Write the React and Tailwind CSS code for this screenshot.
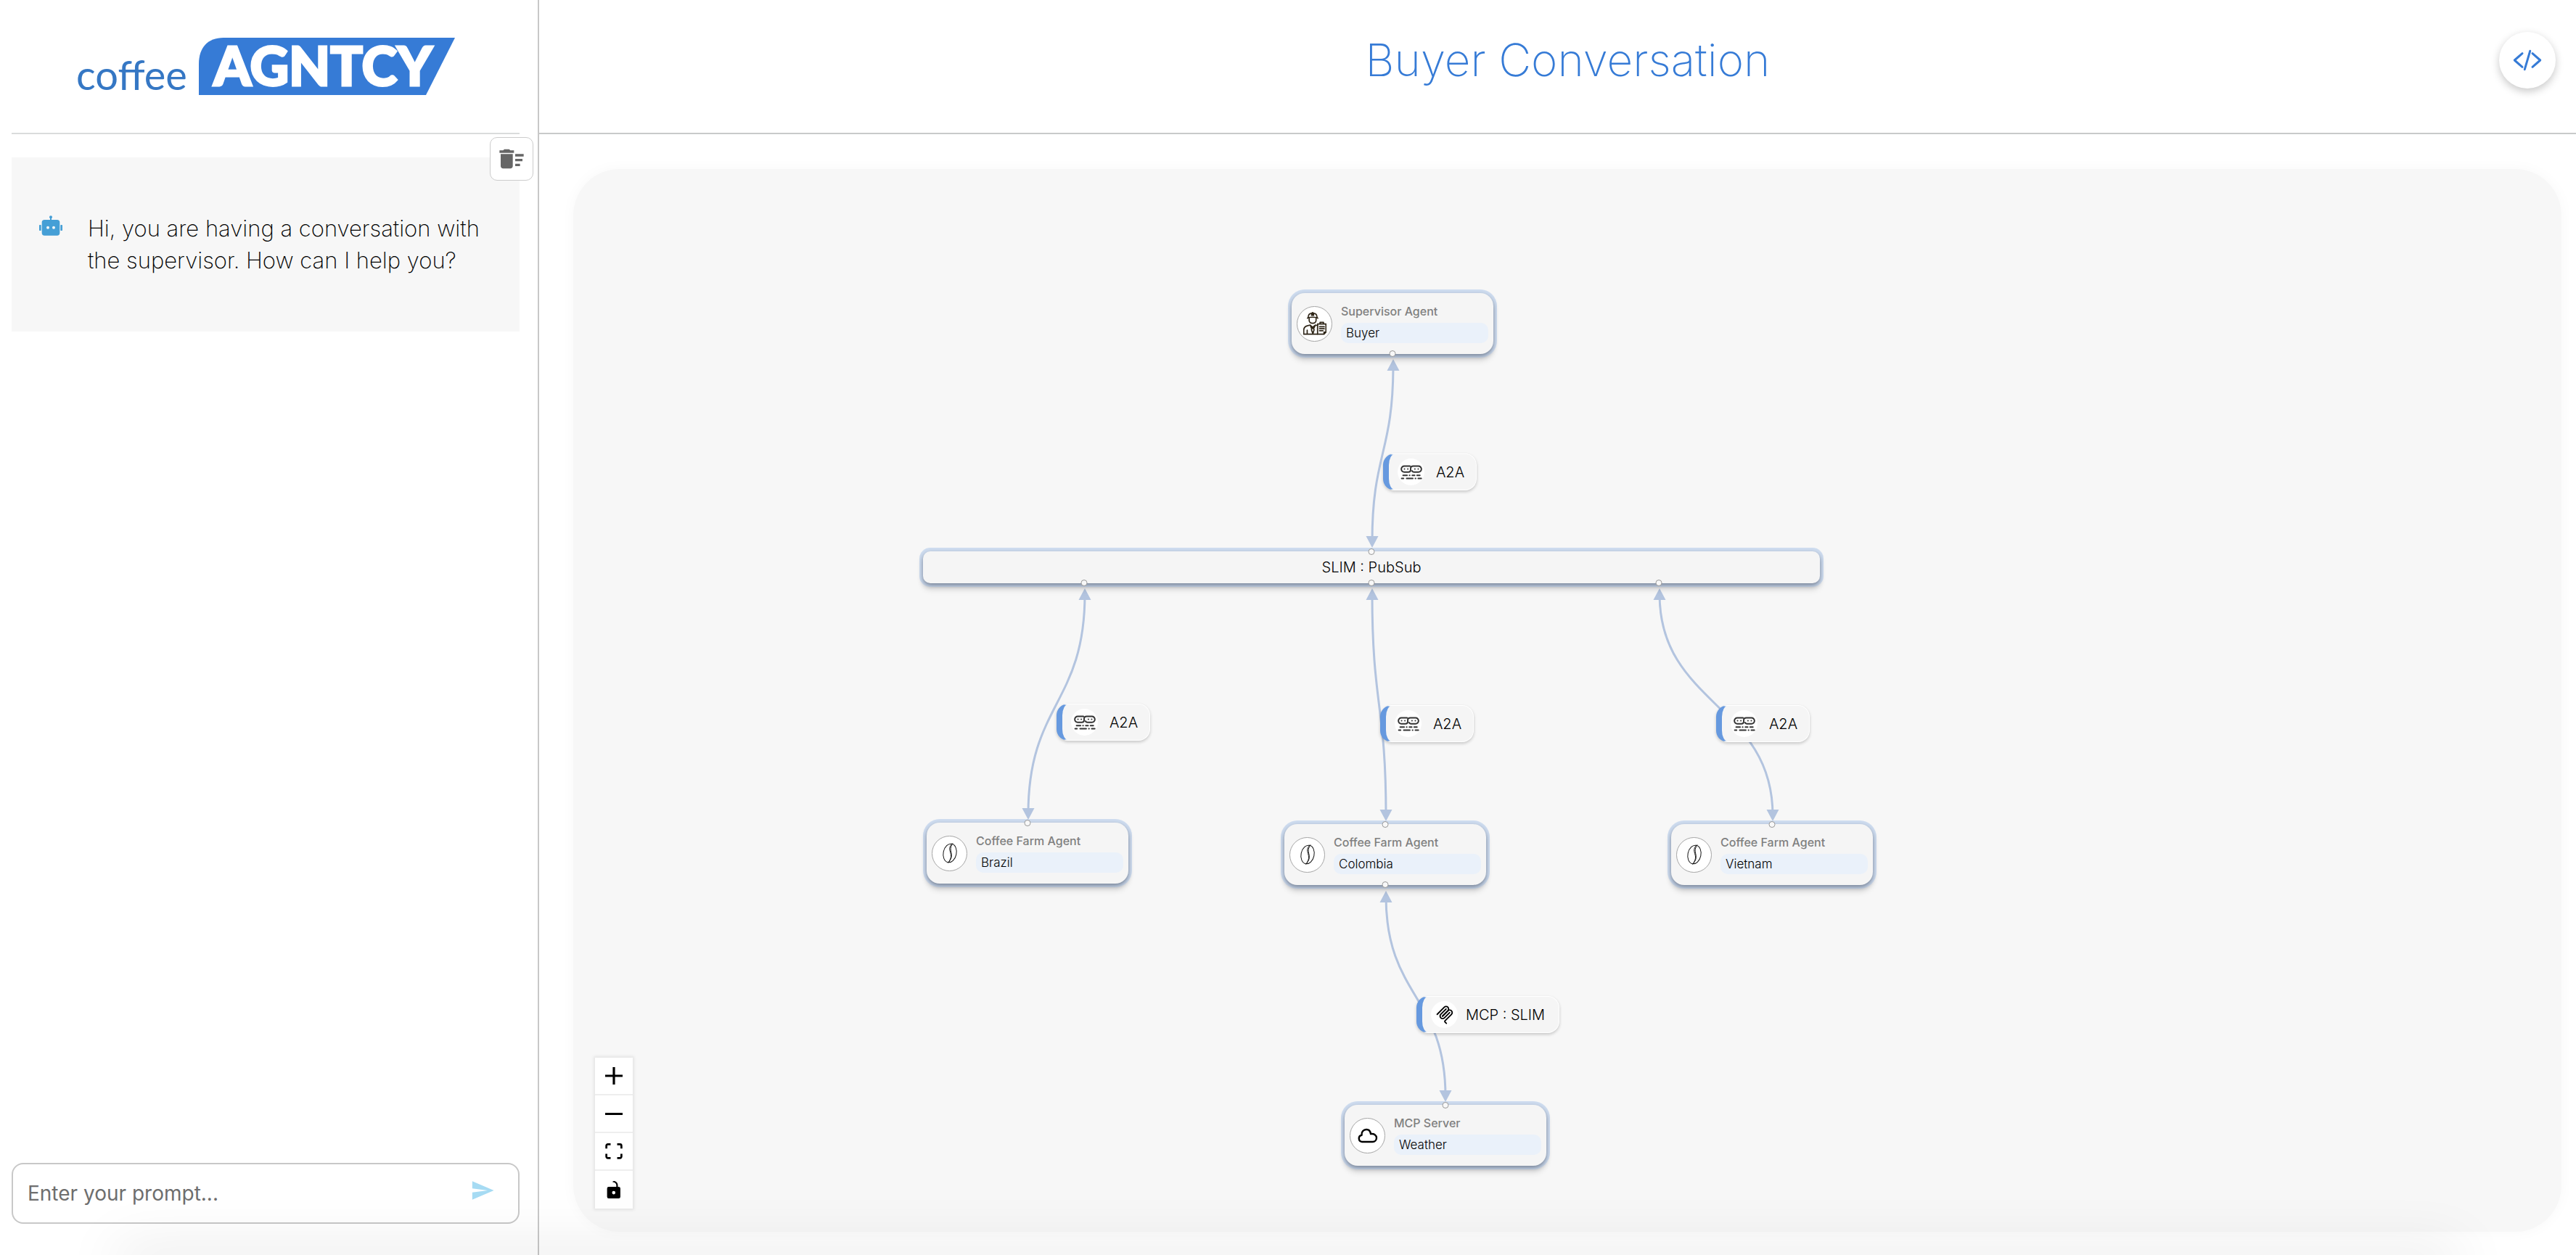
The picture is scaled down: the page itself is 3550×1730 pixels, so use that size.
import React from "react";
import { MdDeleteSweep, MdSend } from "react-icons/md";

function RobotIcon() {
  return (
    <svg viewBox="0 0 96 82" className="h-7 w-8 shrink-0 fill-[#459fd6]" aria-hidden="true">
      <rect x="11" y="17" width="74" height="65" rx="11" />
      <rect x="0" y="38" width="8" height="24" rx="2" />
      <rect x="88" y="38" width="8" height="24" rx="2" />
      <circle cx="48" cy="6" r="6" />
      <rect x="45" y="6" width="6" height="14" />
      <circle cx="36" cy="49" r="6" className="fill-[#f7f7f7]" />
      <circle cx="60" cy="49" r="6" className="fill-[#f7f7f7]" />
    </svg>
  );
}

function CodeIcon() {
  return (
    <svg viewBox="-20 -15 40 30" className="h-[30px] w-10 fill-none stroke-[#367bd6] stroke-3" strokeLinecap="round" strokeLinejoin="round" aria-hidden="true">
      <path d="M-7 -9.3L-17.7 0L-7 9.3M7 -9.3L17.7 0L7 9.3M3.7 -12.7L-3.7 12.7" />
    </svg>
  );
}

function SupervisorIcon() {
  return (
    <svg viewBox="0 0 94 94" className="size-8 fill-none stroke-[#2f2618] stroke-5" strokeLinecap="round" strokeLinejoin="round" aria-hidden="true">
      <path d="M20 22C20 11 27 5 38 5S56 11 56 22M17 25C28 20 48 20 59 25M34 5V14M42 5V14M38 2V14" />
      <path d="M24 26V34C24 41 30 46 38 46S52 41 52 34V26" />
      <path d="M28 53L14 57C5 60 2 67 2 75V90H56M16 74V90M28 53L38 62L49 53L58 55M28 53L34 68M49 53L42 68M38 62L33 72L39 88L44 72L38 62" />
      <path d="M58 49H92V82L84 90H58ZM84 90V82H92M68 49V42H82V49M66 60H85M66 68H85M66 76H80" />
    </svg>
  );
}

function BeanIcon() {
  return (
    <svg viewBox="0 0 24 30" className="h-[30px] w-6 fill-none stroke-[#111] stroke-1" strokeLinecap="round" aria-hidden="true">
      <ellipse cx="12" cy="15" rx="9" ry="13" transform="rotate(12 12 15)" />
      <path d="M15 2C10 7 12 11 13 15S14 22 10 28M16 2C12 7 13 10 14 15S14 23 10 28" />
    </svg>
  );
}

function CloudIcon() {
  return (
    <svg viewBox="-1 -1 29 21" className="h-[21px] w-[29px] fill-none stroke-black stroke-[2.4]" strokeLinejoin="round" aria-hidden="true">
      <path d="M6 18A4.7 4.7 0 0 1 5.6 8.7C4.8 4.5 8 1 12 1C15.2 1 17.6 3.4 18 7.2C22.600 6.200 26 9 26 12.600C26 15.800 23.600 18 20.500 18Z" />
    </svg>
  );
}

function AgentLinkIcon() {
  return (
    <svg viewBox="0 0 92 60" className="h-5 w-[30px] fill-none stroke-[#333] stroke-6" strokeLinecap="round" aria-hidden="true">
      <path d="M40 4H16A12.500 12.500 0 0 0 16 29H33Q43 29 43 20V13Q43 4 54 4H76A12.500 12.500 0 0 1 76 29H58Q50 29 49 24" />
      <path d="M17 16H17.100M31 16H31.100M61 16H61.100M75 16H75.100" />
      <path d="M11 43H28M38 43H39M50 43H60M70 43H82M5 56H13M26 56H52M63 56H64M75 56H88" />
    </svg>
  );
}

function ProtocolIcon() {
  return (
    <svg viewBox="0 0 180 180" className="size-[26px] fill-none stroke-black stroke-[13]" strokeLinecap="round" aria-hidden="true">
      <path d="M18 84.8528L85.8822 16.9706C95.2548 7.59798 110.451 7.59798 119.823 16.9706C129.196 26.3431 129.196 41.5391 119.823 50.9117L68.5581 102.177" />
      <path d="M69.2652 101.47L119.823 50.9117C129.196 41.5391 144.392 41.5391 153.765 50.9117L154.118 51.2652C163.491 60.6378 163.491 75.8338 154.118 85.2063L92.7248 146.6C89.6006 149.724 89.6006 154.789 92.7248 157.913L105.331 170.52" />
      <path d="M102.853 33.9411L52.6482 84.1457C43.2756 93.5183 43.2756 108.714 52.6482 118.087C62.0208 127.459 77.2167 127.459 86.5893 118.087L136.794 67.8822" />
    </svg>
  );
}

const agents = [
  { left: 990, top: 171, title: "Supervisor Agent", name: "Buyer", Icon: SupervisorIcon, out: true },
  { left: 487, top: 901, title: "Coffee Farm Agent", name: "Brazil", Icon: BeanIcon, in: true },
  { left: 980, top: 903, title: "Coffee Farm Agent", name: "Colombia", Icon: BeanIcon, in: true, out: true },
  { left: 1513, top: 903, title: "Coffee Farm Agent", name: "Vietnam", Icon: BeanIcon, in: true },
  { left: 1063, top: 1290, title: "MCP Server", name: "Weather", Icon: CloudIcon, in: true },
];

const edges = [
  [1130, 262, 1101, 522],
  [705, 578, 627, 897],
  [1101, 578, 1120, 899],
  [1497, 578, 1653, 899],
  [1120, 995, 1202, 1286],
];

const labels = [
  { left: 1116, top: 392, text: "A2A", Icon: AgentLinkIcon },
  { left: 666, top: 737, text: "A2A", Icon: AgentLinkIcon },
  { left: 1112, top: 739, text: "A2A", Icon: AgentLinkIcon },
  { left: 1575, top: 739, text: "A2A", Icon: AgentLinkIcon },
  { left: 1162, top: 1140, text: "MCP : SLIM", Icon: ProtocolIcon, wide: true },
];

const controls = [
  { label: "Zoom in", box: "0 0 32 32", size: "size-6", d: "M32 18.133H18.133V32h-4.266V18.133H0v-4.266h13.867V0h4.266v13.867H32z" },
  { label: "Zoom out", box: "0 0 32 4", size: "h-[3px] w-6", d: "M0 0h32v4.2H0z" },
  { label: "Fit view", box: "0 0 32 30", size: "h-[22px] w-6", d: "M3.692 4.63c0-.53.4-.938.939-.938h5.215V0H4.708C2.13 0 0 2.054 0 4.63v5.216h3.692V4.631zM27.354 0h-5.2v3.692h5.17c.53 0 .984.4.984.939v5.215H32V4.631A4.624 4.624 0 0027.354 0zm.954 24.83c0 .532-.4.94-.939.94h-5.215v3.768h5.215c2.577 0 4.631-2.13 4.631-4.707v-5.139h-3.692v5.139zm-23.677.94a.919.919 0 01-.939-.94v-5.138H0v5.139c0 2.577 2.13 4.707 4.708 4.707h5.138V25.77H4.631z" },
  { label: "Toggle interactivity", box: "0 0 25 32", size: "h-6 w-5", d: "M21.333 10.667H19.81V7.619C19.81 3.429 16.38 0 12.19 0c-4.114 1.828-1.37 2.133.305 2.438 1.676.305 4.42 2.59 4.42 5.181v3.048H3.047A3.056 3.056 0 000 13.714v15.238A3.056 3.056 0 003.048 32h18.285a3.056 3.056 0 003.048-3.048V13.714a3.056 3.056 0 00-3.048-3.047zM12.19 24.533a3.056 3.056 0 01-3.047-3.047 3.056 3.056 0 013.047-3.048 3.056 3.056 0 013.048 3.048 3.056 3.056 0 01-3.048 3.047z" },
];

const handle = "absolute size-[9px] -translate-x-1/2 rounded-full border border-[#999] bg-[#f8f8f8]";
const raised = "bg-[#f5f5f5] shadow-[0_3px_6px_rgba(30,40,60,0.5),0_0_0_5px_#cfddf0,0_9px_8px_rgba(0,0,0,0.12)]";

function AgentNode({ agent }) {
  const { Icon } = agent;
  return (
    <div className={`absolute flex h-[84px] w-[278px] items-center gap-3 rounded-[18px] px-[7px] ${raised}`} style={{ left: agent.left, top: agent.top }}>
      <div className="flex size-[49px] shrink-0 items-center justify-center rounded-full border border-[#a5a5a5] bg-white">
        <Icon />
      </div>
      <div className="flex flex-1 flex-col gap-1.5">
        <div className="text-[16px] leading-5 font-medium text-[#808080]">{agent.title}</div>
        <div className="rounded-[10px] bg-[#eaf1fa] px-[7px] text-[17px] leading-7 font-light text-black">{agent.name}</div>
      </div>
      {agent.in && <span className={`${handle} -top-1 left-1/2`} />}
      {agent.out && <span className={`${handle} -bottom-1 left-1/2`} />}
    </div>
  );
}

function EdgeLabel({ label }) {
  const { Icon } = label;
  return (
    <div
      className={`absolute flex h-[51px] items-center rounded-[16px] border border-l-8 border-white border-l-[#6699df] bg-[#f5f5f5] pl-3 shadow-[0_2px_4px_rgba(0,0,0,0.2)] ${label.wide ? "w-[197px] pr-2" : "w-[129px]"}`}
      style={{ left: label.left, top: label.top }}
    >
      <span className="flex size-[37px] shrink-0 items-center justify-center rounded-full bg-white">
        <Icon />
      </span>
      <span className="flex-1 text-center text-[20px] leading-6 font-light">{label.text}</span>
    </div>
  );
}

function Edges() {
  return (
    <svg className="absolute inset-0 size-full" aria-hidden="true">
      {edges.map(([x1, y1, x2, y2]) => {
        const mid = (y1 + y2) / 2;
        return (
          <g key={`${x1}-${x2}`}>
            <path d={`M${x1} ${y1 + 8}C${x1} ${mid} ${x2} ${mid} ${x2} ${y2 - 8}`} className="fill-none stroke-[#b3c4df] stroke-3" />
            <path d={`M${x1} ${y1}l8.500 16h-17zM${x2} ${y2}l8.500 -16h-17z`} className="fill-[#b3c4df]" />
          </g>
        );
      })}
    </svg>
  );
}

function Logo() {
  return (
    <div className="flex items-end gap-4" role="img" aria-label="coffee AGNTCY">
      <span className="font-[Lato,sans-serif] text-[56px] leading-none text-[#3577c4]">coffee</span>
      <svg viewBox="0 0 353 79" className="h-[79px] w-[353px] overflow-visible">
        <path d="M0 79V36C0 14 12 0 34 0H353L313 79Z" className="fill-[#367bd6]" />
        <text x="171" y="66" textAnchor="middle" className="fill-white stroke-white stroke-3 font-[Lato,sans-serif] text-[74px] font-black">AGNTCY</text>
      </svg>
    </div>
  );
}

function Sidebar() {
  return (
    <aside className="relative flex w-[743px] shrink-0 flex-col border-r-2 border-[#c8c8c8] pr-[25px] pl-4">
      <div className="flex h-[185px] items-center justify-center border-b-2 border-[#dadcdc]">
        <Logo />
      </div>
      <div className="mt-8 flex min-h-60 items-center bg-[#f7f7f7] pr-10 pl-[38px]">
        <div className="flex gap-[35px]">
          <div className="pt-1"><RobotIcon /></div>
          <p className="text-[31px] leading-[44px] font-extralight">Hi, you are having a conversation with the supervisor. How can I help you?</p>
        </div>
      </div>
      <button type="button" aria-label="Clear conversation" className="absolute top-[189px] right-1.5 flex size-[60px] items-center justify-center rounded-[10px] border border-[#ccc] bg-white">
        <MdDeleteSweep className="size-10 text-[#666]" />
      </button>
      <form className="mt-auto mb-[43px] flex h-[84px] items-center rounded-[16px] border-2 border-[#c8c8c8] bg-white pr-8 pl-5" onSubmit={(e) => e.preventDefault()}>
        <input type="text" aria-label="Prompt" placeholder="Enter your prompt..." className="min-w-0 flex-1 text-[28px] outline-none placeholder:text-[#6e6e6e]" />
        <button type="submit" aria-label="Send" className="pb-2">
          <MdSend className="size-[34px] text-[#a6dbf3]" />
        </button>
      </form>
    </aside>
  );
}

function Canvas() {
  return (
    <div className="relative flex flex-1 items-end rounded-[64px] bg-[#f7f7f7] p-8 pl-[30px] shadow-[0_0_20px_rgba(0,0,0,0.03)]">
      <Edges />
      <div className={`absolute top-[527px] left-[482px] flex h-11 w-[1236px] items-center justify-center rounded-[10px] text-[20px] font-light ${raised}`}>
        SLIM : PubSub
        <span className={`${handle} -top-1 left-1/2`} />
        <span className={`${handle} -bottom-1 left-[18%]`} />
        <span className={`${handle} -bottom-1 left-1/2`} />
        <span className={`${handle} -bottom-1 left-[82%]`} />
      </div>
      {agents.map((agent) => <AgentNode key={agent.name} agent={agent} />)}
      {labels.map((label) => <EdgeLabel key={label.left} label={label} />)}
      <div className="relative flex flex-col shadow-[0_0_4px_2px_rgba(0,0,0,0.08)]">
        {controls.map((c) => (
          <button key={c.label} type="button" aria-label={c.label} className="flex size-[52px] items-center justify-center border-b-2 border-[#eee] bg-white last:border-b-0">
            <svg viewBox={c.box} className={`${c.size} fill-black`} aria-hidden="true"><path d={c.d} /></svg>
          </button>
        ))}
      </div>
    </div>
  );
}

export default function App() {
  return (
    <div className="relative flex h-screen overflow-hidden bg-white font-[Inter,sans-serif] text-black">
      <Sidebar />
      <main className="flex min-w-0 flex-1 flex-col">
        <header className="grid h-[185px] grid-cols-[1fr_auto_1fr] items-center border-b-2 border-[#c8caca] pr-7 pb-[18px] pl-14">
          <h1 className="col-start-2 text-[62px] leading-none font-extralight text-[#367bd6]">Buyer Conversation</h1>
          <button type="button" aria-label="View code" className="flex size-[78px] items-center justify-center justify-self-end rounded-full bg-white shadow-[0_4px_12px_rgba(0,0,0,0.22)]">
            <CodeIcon />
          </button>
        </header>
        <div className="flex flex-1 pt-12 pr-5 pb-8 pl-[47px]">
          <Canvas />
        </div>
      </main>
      <div className="pointer-events-none absolute inset-x-40 -bottom-5 h-5 shadow-[0_0_80px_rgba(0,0,0,0.2)]" />
    </div>
  );
}
